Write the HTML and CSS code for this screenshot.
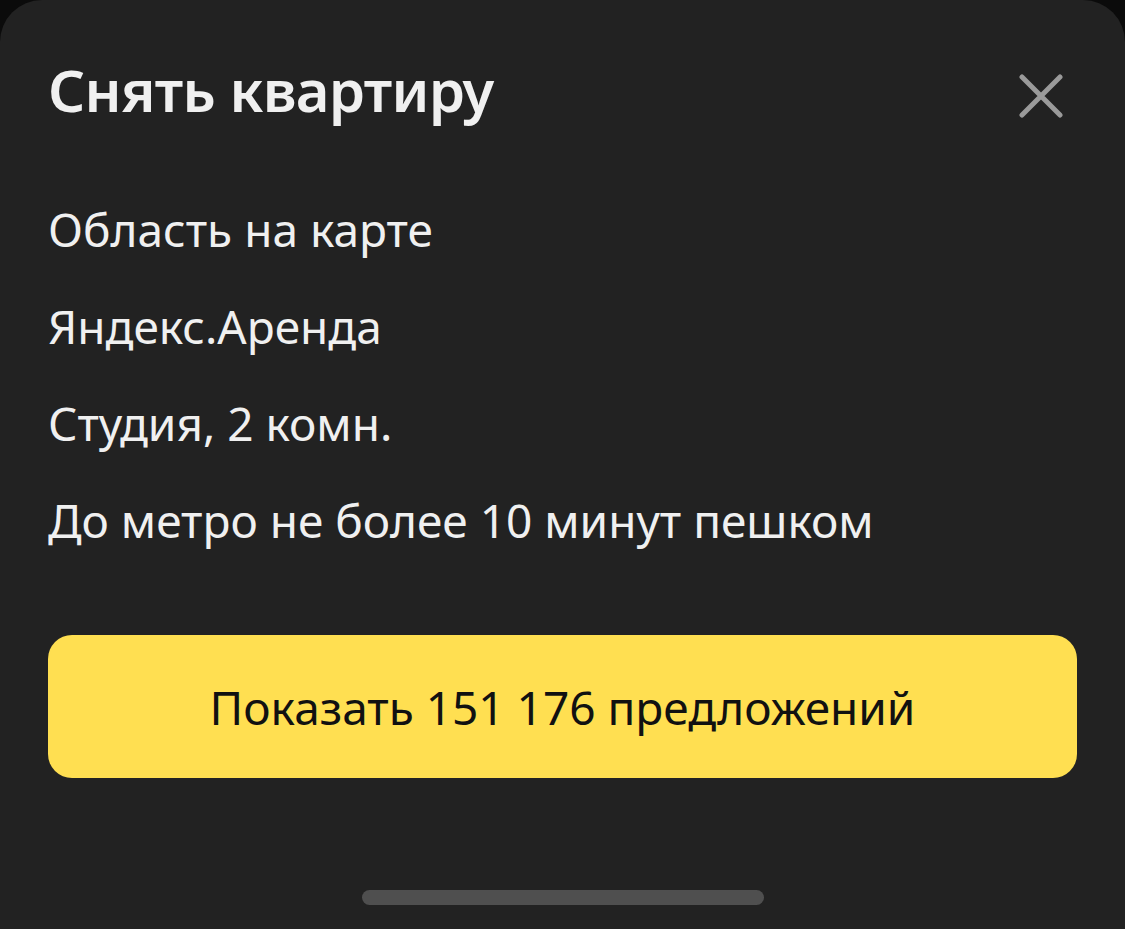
FILE: index.html
```html
<!DOCTYPE html>
<html lang="ru">
<head>
<meta charset="utf-8">
<link rel="stylesheet" href="styles.css">
</head>
<body>
<div class="sheet">
  <div class="header">
    <h1 class="title">Снять квартиру</h1>
    <button class="close" aria-label="Закрыть">
      <svg width="44" height="44" viewBox="0 0 44 44"><path d="M3 3 L41 41 M41 3 L3 41" stroke="#9a9a9a" stroke-width="5" stroke-linecap="round"/></svg>
    </button>
  </div>
  <ul class="filters">
    <li>Область на карте</li>
    <li>Яндекс.Аренда</li>
    <li>Студия, 2 комн.</li>
    <li>До метро не более 10 минут пешком</li>
  </ul>
  <button class="show">Показать 151 176 предложений</button>
  <div class="home"></div>
</div>
</body>
</html>
```
FILE: styles.css
```css
html, body {
  margin: 0;
  padding: 0;
  background: #0b0b0b;
  width: 1125px;
  height: 929px;
  overflow: hidden;
}
.sheet {
  box-sizing: border-box;
  width: 1125px;
  height: 929px;
  background: #222222;
  border-radius: 42px 42px 0 0;
  padding: 0 48px;
  font-family: "Noto Sans", sans-serif;
  color: #f0f0f0;
  display: flex;
  flex-direction: column;
}
.header {
  display: flex;
  justify-content: space-between;
  align-items: flex-start;
  padding-top: 44px;
  height: 91px;
}
.title {
  margin: 0;
  font-size: 58px;
  font-weight: 600;
  letter-spacing: -0.7px;
  line-height: 91px;
}
.close {
  background: none;
  border: 0;
  padding: 0;
  margin-top: 30px;
  margin-right: 14px;
  width: 44px;
  height: 44px;
  display: flex;
}
.filters {
  list-style: none;
  margin: 0;
  padding: 0;
  margin-top: 46px;
}
.filters li {
  font-size: 46px;
  line-height: 97px;
  height: 97px;
}
.show {
  margin-top: 66px;
  height: 143px;
  width: 100%;
  flex-shrink: 0;
  border: 0;
  border-radius: 24px;
  background: #ffdf51;
  color: #111111;
  font-family: "Noto Sans", sans-serif;
  font-size: 46px;
}
.home {
  align-self: center;
  width: 402px;
  height: 15px;
  border-radius: 8px;
  background: #4f4f4f;
  margin-top: 112px;
}
```
